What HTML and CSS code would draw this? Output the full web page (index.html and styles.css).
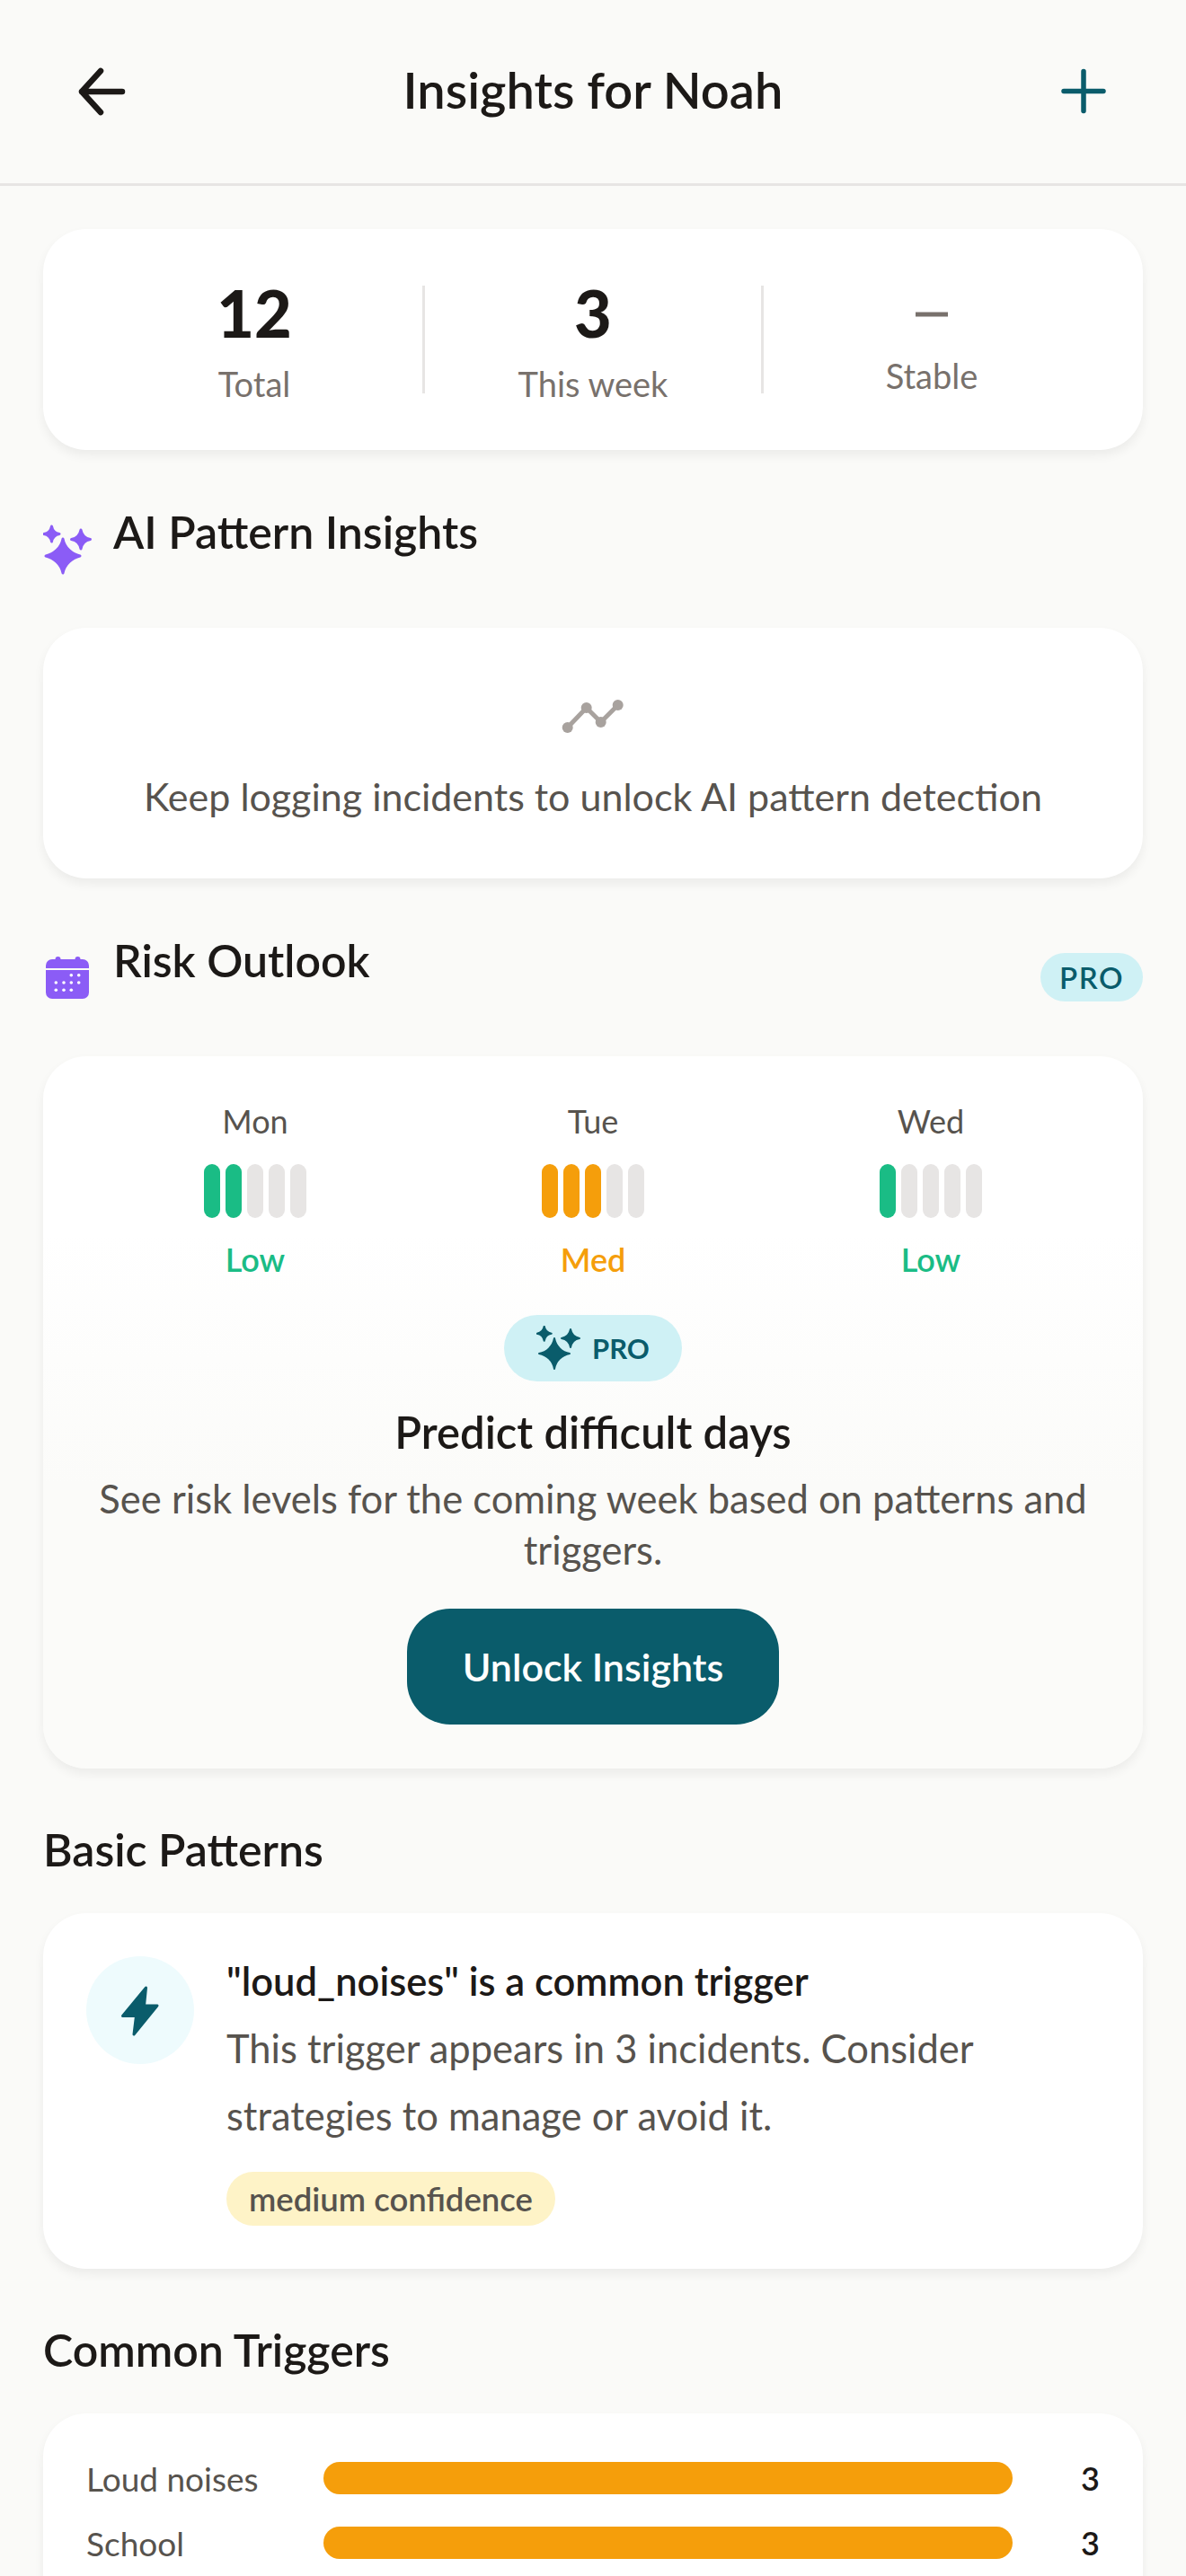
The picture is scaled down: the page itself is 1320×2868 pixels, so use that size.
FILE: index.html
```html
<!DOCTYPE html>
<html>
<head>
  <title>Insights for Noah</title>
  <link rel="stylesheet" href="styles.css">
</head>
<body>
  <header class="top-bar">
    <svg class="top-icon" viewBox="0 0 60 60"><path d="M52 30H7M28 7 7 30l21 23" /></svg>
    <h1>Insights for Noah</h1>
    <svg class="top-icon teal" viewBox="0 0 60 60"><path d="M30 7.500v44M8 29.500h44" /></svg>
  </header>

  <main class="content">
    <section class="card stats">
      <div class="stat">
        <div class="stat-num">12</div>
        <div class="stat-label">Total</div>
      </div>
      <div class="stat-line"></div>
      <div class="stat">
        <div class="stat-num">3</div>
        <div class="stat-label">This week</div>
      </div>
      <div class="stat-line"></div>
      <div class="stat stat-trend">
        <svg class="trend-icon" viewBox="0 0 60 60"><path d="M12 30h36" /></svg>
        <div class="stat-label">Stable</div>
      </div>
    </section>

    <div class="section-head">
      <svg class="head-icon" viewBox="0 0 60 60">
        <path class="spark" d="M22 18C23.900 28.450 32.550 35.100 41 37C32.550 38.900 23.900 45.550 22 56C20.100 45.550 11.450 38.900 3 37C11.450 35.100 20.100 28.450 22 18Z" />
        <path class="spark" d="M9.500 4C10.350 8.700 13.300 11.650 18 12.500C13.300 13.350 10.350 16.300 9.500 21C8.650 16.300 5.700 13.350 1 12.500C5.700 11.650 8.650 8.700 9.500 4Z" />
        <path class="spark" d="M42 8.100C43.050 13.900 46.700 17.550 52.500 18.600C46.700 19.650 43.050 23.300 42 29.100C40.950 23.300 37.300 19.650 31.500 18.600C37.300 17.550 40.950 13.900 42 8.100Z" />
      </svg>
      <h2>AI Pattern Insights</h2>
    </div>
    <section class="card empty-card">
      <svg class="chart-icon" viewBox="0 0 70 40">
        <path d="M6.700 33 27.700 11 43.700 27 62.700 8" />
        <circle cx="6.700" cy="33" r="6" /><circle cx="27.700" cy="11" r="6" /><circle cx="43.700" cy="27" r="6" /><circle cx="62.700" cy="8" r="6" />
      </svg>
      <p>Keep logging incidents to unlock AI pattern detection</p>
    </section>

    <div class="section-head">
      <svg class="head-icon" viewBox="0 0 60 60">
        <path class="cal" d="M3 16a7 7 0 0 1 7-7h3.500a3 3 0 0 1 6 0h16a3 3 0 0 1 6 0H44a7 7 0 0 1 7 7v3H3Z" />
        <path class="cal" d="M3 21h48v25a7 7 0 0 1-7 7H10a7 7 0 0 1-7-7Z" />
        <g class="cal-dots">
          <circle cx="31.300" cy="26.700" r="1.800" /><circle cx="39.700" cy="26.700" r="1.800" />
          <circle cx="14.300" cy="35" r="1.800" /><circle cx="23" cy="35" r="1.800" /><circle cx="31.300" cy="35" r="1.800" /><circle cx="39.700" cy="35" r="1.800" />
          <circle cx="14.300" cy="43.300" r="1.800" /><circle cx="23" cy="43.300" r="1.800" /><circle cx="31.300" cy="43.300" r="1.800" />
        </g>
      </svg>
      <h2>Risk Outlook</h2>
      <span class="pro-tag">PRO</span>
    </div>
    <section class="card risk-card">
      <div class="days">
        <div class="day">
          <div class="day-name">Mon</div>
          <div class="meter low"><i class="on"></i><i class="on"></i><i></i><i></i><i></i></div>
          <div class="level low">Low</div>
        </div>
        <div class="day">
          <div class="day-name">Tue</div>
          <div class="meter med"><i class="on"></i><i class="on"></i><i class="on"></i><i></i><i></i></div>
          <div class="level med">Med</div>
        </div>
        <div class="day">
          <div class="day-name">Wed</div>
          <div class="meter low"><i class="on"></i><i></i><i></i><i></i><i></i></div>
          <div class="level low">Low</div>
        </div>
      </div>
      <div class="pro-pill">
        <svg class="pill-icon" viewBox="0 0 50 50">
          <path d="M20 14C21.700 23.350 28.650 29.300 37 31C28.650 32.700 21.700 38.650 20 48C18.300 38.650 11.350 32.700 3 31C11.350 29.300 18.300 23.350 20 14Z" />
          <path d="M8.700 .7C9.500 5.100 12.300 7.900 16.700 8.700C12.300 9.500 9.500 12.300 8.700 16.700C7.900 12.300 5.100 9.500 .7 8.700C5.100 7.900 7.900 5.100 8.700 .7Z" />
          <path d="M38 4C39 9.500 42.500 13 48 14C42.500 15 39 18.500 38 24C37 18.500 33.500 15 28 14C33.500 13 37 9.500 38 4Z" />
        </svg>
        <span>PRO</span>
      </div>
      <h3>Predict difficult days</h3>
      <p class="risk-text">See risk levels for the coming week based on patterns and triggers.</p>
      <button class="unlock">Unlock Insights</button>
    </section>

    <div class="section-head plain">
      <h2>Basic Patterns</h2>
    </div>
    <section class="card pattern">
      <div class="bolt-wrap">
        <svg class="bolt" viewBox="0 0 44 60"><path d="M28.500 5 2.500 36.500H17.500L15 57 41 25H26.500Z" /></svg>
      </div>
      <div class="pattern-body">
        <h4>"loud_noises" is a common trigger</h4>
        <p>This trigger appears in 3 incidents. Consider strategies to manage or avoid it.</p>
        <span class="confidence">medium confidence</span>
      </div>
    </section>

    <div class="section-head plain">
      <h2>Common Triggers</h2>
    </div>
    <section class="card triggers">
      <div class="trigger">
        <span class="trigger-name">Loud noises</span>
        <div class="trigger-bar"></div>
        <span class="trigger-count">3</span>
      </div>
      <div class="trigger">
        <span class="trigger-name">School</span>
        <div class="trigger-bar"></div>
        <span class="trigger-count">3</span>
      </div>
    </section>
  </main>
</body>
</html>
```

FILE: styles.css
```css
* {
  box-sizing: border-box;
}
html, body {
  margin: 0;
  height: 2868px;
  overflow: hidden;
}
body {
  font-family: "Lato", "Noto Sans", sans-serif;
  background: #fafaf8;
  color: #1c1917;
}
h1, h2, h3, h4, p {
  margin: 0;
  font-weight: 600;
}
.top-bar {
  height: 207px;
  padding: 0 84px;
  display: flex;
  align-items: center;
  justify-content: space-between;
  border-bottom: 3px solid #e7e5e4;
}
.top-bar h1 {
  margin-bottom: 5px;
  font-size: 56px;
}
.top-icon {
  width: 60px;
  height: 60px;
  fill: none;
  stroke: #1c1917;
  stroke-width: 6.500;
  stroke-linecap: round;
  stroke-linejoin: round;
}
.top-icon.teal {
  stroke: #0a5c6b;
  stroke-width: 5.500;
}
.content {
  padding: 48px;
}
.card {
  background: white;
  border-radius: 48px;
  box-shadow: 0 6px 12px rgba(0,0,0,0.06);
}
.stats {
  height: 246px;
  padding: 0 48px;
  display: flex;
  align-items: center;
}
.stat {
  flex: 1;
  display: flex;
  flex-direction: column;
  align-items: center;
  height: 126px;
}
.stat-num {
  margin-top: -9px;
  font-size: 72px;
  font-weight: 900;
  line-height: 84px;
}
.stat-label {
  margin-top: 16px;
  font-size: 38px;
  line-height: 42px;
  color: #78716c;
}
.stat-line {
  width: 3px;
  height: 120px;
  background: #e7e5e4;
}
.trend-icon {
  width: 60px;
  height: 60px;
  margin-top: 5px;
  margin-bottom: 1px;
  fill: none;
  stroke: #78716c;
  stroke-width: 5;
}
.section-head {
  margin-top: 55px;
  display: flex;
  align-items: flex-end;
  height: 86px;
}
.section-head h2 {
  font-size: 50px;
  line-height: 66px;
  margin-bottom: 17px;
  margin-left: 18px;
}
.section-head.plain {
  height: 66px;
  margin-bottom: 40px;
}
.section-head.plain h2 {
  margin: 0 0 -2px;
}
.section-head + .card {
  margin-top: 57px;
}
.section-head.plain + .card {
  margin-top: 0;
}
.head-icon {
  width: 60px;
  height: 60px;
  flex: none;
}
.spark {
  fill: #8b5cf6;
  stroke: #8b5cf6;
  stroke-width: 3;
  stroke-linejoin: round;
}
.cal {
  fill: #8b5cf6;
}
.cal-dots {
  fill: white;
}
.pro-tag {
  margin-left: auto;
  width: 114px;
  height: 54px;
  margin-bottom: 4px;
  border-radius: 27px;
  background: #cff1f5;
  color: #0a5c6b;
  font-size: 33px;
  font-weight: 600;
  letter-spacing: 1.500px;
  line-height: 54px;
  text-align: center;
}
.empty-card {
  height: 279px;
  padding-top: 78px;
  display: flex;
  flex-direction: column;
  align-items: center;
}
.chart-icon {
  width: 70px;
  height: 40px;
  fill: #a8a29e;
  stroke: #a8a29e;
}
.chart-icon path {
  fill: none;
  stroke-width: 5;
}
.chart-icon circle {
  stroke: none;
}
.empty-card p {
  margin-top: 44px;
  font-size: 43px;
  font-weight: 400;
  color: #57534e;
}
.risk-card {
  height: 793px;
  padding: 48px 48px 0;
  display: flex;
  flex-direction: column;
  align-items: center;
  background: linear-gradient(#ffffff 25%, #fbfbf9 60%);
}
.days {
  width: 100%;
  display: flex;
}
.day {
  flex: 1;
  display: flex;
  flex-direction: column;
  align-items: center;
}
.day-name {
  font-size: 36px;
  line-height: 48px;
  color: #57534e;
}
.meter {
  margin-top: 24px;
  display: flex;
  gap: 6px;
}
.meter i {
  width: 18px;
  height: 60px;
  border-radius: 9px;
  background: #e7e5e4;
}
.meter.low i.on {
  background: #1abc85;
}
.meter.med i.on {
  background: #f59e0b;
}
.level {
  margin-top: 22px;
  font-size: 36px;
  font-weight: 600;
  line-height: 48px;
}
.level.low {
  color: #1abc85;
}
.level.med {
  color: #f59e0b;
}
.pro-pill {
  margin-top: 38px;
  width: 198px;
  height: 74px;
  border-radius: 37px;
  background: #cff1f5;
  display: flex;
  align-items: center;
  justify-content: center;
  gap: 12px;
  color: #0a5c6b;
  font-size: 31px;
  font-weight: 700;
}
.pill-icon {
  width: 50px;
  height: 50px;
  fill: #0a5c6b;
  stroke: #0a5c6b;
  stroke-width: 2;
  stroke-linejoin: round;
}
.risk-card h3 {
  margin-top: 26px;
  font-size: 49px;
  line-height: 60px;
}
.risk-text {
  margin-top: 16px;
  width: 1100px;
  text-align: center;
  font-size: 43.500px;
  font-weight: 400;
  line-height: 57px;
  color: #57534e;
}
.unlock {
  margin-top: 37px;
  width: 414px;
  height: 129px;
  border: none;
  border-radius: 48px;
  background: #0a5c6b;
  color: white;
  font-family: inherit;
  font-size: 43px;
  font-weight: 600;
}
.pattern {
  height: 396px;
  padding: 48px;
  display: flex;
  gap: 36px;
}
.bolt-wrap {
  width: 120px;
  height: 120px;
  flex: none;
  border-radius: 50%;
  background: #eefbfd;
  display: flex;
  align-items: center;
  justify-content: center;
}
.bolt {
  width: 44px;
  height: 60px;
  fill: #0a5c6b;
  stroke: #0a5c6b;
  stroke-width: 3;
  stroke-linejoin: round;
}
.pattern-body h4 {
  font-size: 43.500px;
  line-height: 54px;
}
.pattern-body p {
  margin-top: 11px;
  font-size: 43.500px;
  font-weight: 400;
  line-height: 75px;
  color: #57534e;
}
.confidence {
  display: inline-block;
  margin-top: 25px;
  height: 60px;
  padding: 0 25px;
  border-radius: 30px;
  background: #fef3c7;
  color: #57534e;
  font-size: 36.500px;
  font-weight: 600;
  line-height: 60px;
}
.triggers {
  height: 400px;
  padding: 54px 48px 0;
  display: flex;
  flex-direction: column;
  gap: 36px;
}
.trigger {
  display: flex;
  align-items: center;
  height: 36px;
}
.trigger-name {
  width: 264px;
  font-size: 37px;
  color: #57534e;
}
.trigger-bar {
  width: 767px;
  height: 36px;
  border-radius: 18px;
  background: #f59e0b;
}
.trigger-count {
  margin-left: auto;
  font-size: 36px;
  font-weight: 600;
}
```
